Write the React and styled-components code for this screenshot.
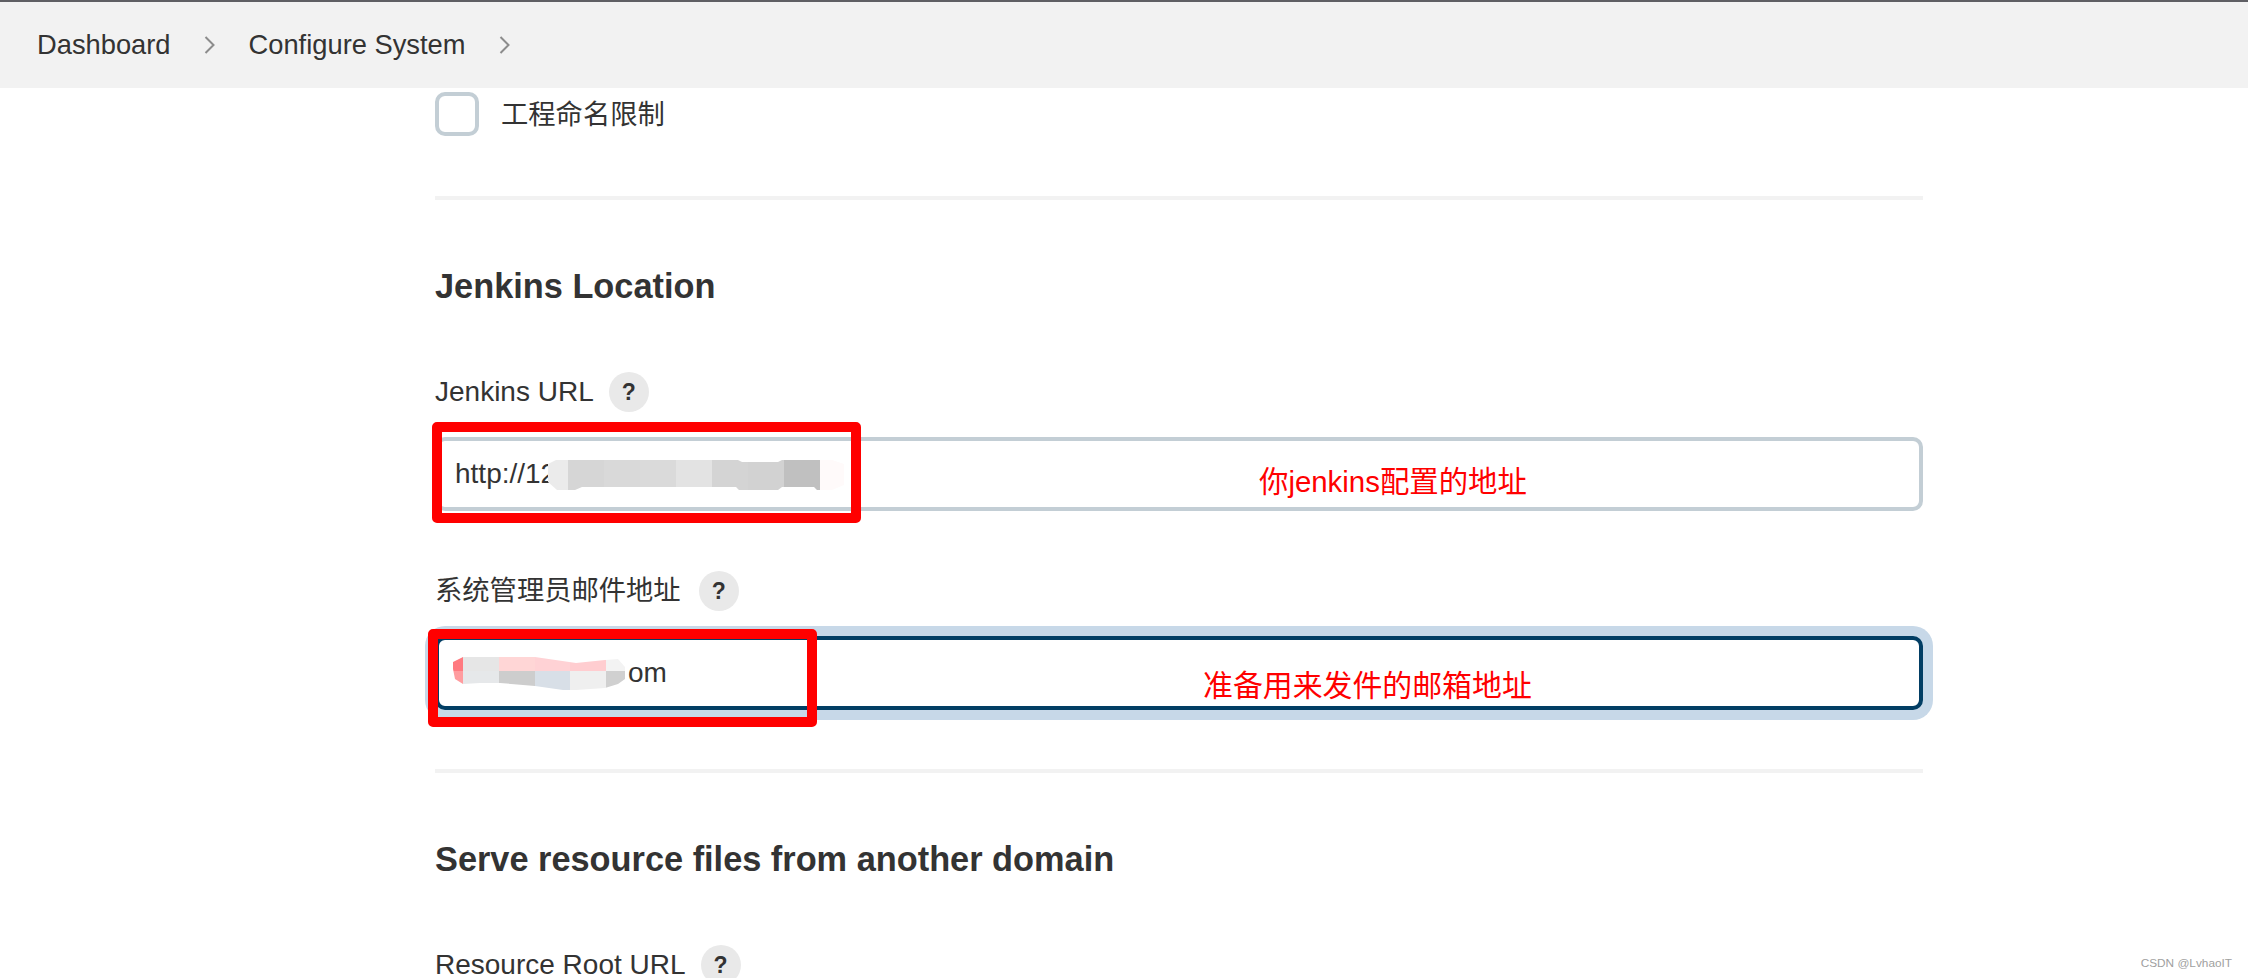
import React from "react";
import styled, { createGlobalStyle } from "styled-components";

const urlBlur = [
    { w: 20, c: "#ebebeb" },
    { w: 36, c: "#d6d6d6" },
    { w: 36, c: "#d9d9d9" },
    { w: 36, c: "#dadada" },
    { w: 36, c: "#e3e3e3" },
    { w: 36, c: "#d4d4d4" },
    { w: 36, c: "#d2d2d2" },
    { w: 36, c: "#c0c0c0" },
    { w: 24, c: "#fffafa" },
];
const mailBlur = [
    "#ff7a80", "#e6e6e6", "#ffd6d6", "#ffd2d5", "#ffcdd0", "#f3f3f3",
    "#ff9c9f", "#e6e8ea", "#cdcdcd", "#d8dfe7", "#efefef", "#d0d0d0",
];

const Chevron = () => (
    <ChevronIcon viewBox="0 0 11 18">
        <polyline points="1.5,1 9.5,9 1.5,17" />
    </ChevronIcon>
);

const App = () => {
    return (
        <Page>
            <Global />
            <Header>
                <Crumb>Dashboard</Crumb>
                <Chevron />
                <Crumb>Configure System</Crumb>
                <Chevron />
            </Header>
            <Content>
                <CheckRow>
                    <CheckBox />
                    <CheckLabel>工程命名限制</CheckLabel>
                </CheckRow>
                <Divider $top={60} />
                <Heading>Jenkins Location</Heading>
                <LabelRow>
                    <span>Jenkins URL</span>
                    <Help>?</Help>
                </LabelRow>
                <Field>
                    <Input $indent={16} defaultValue="http://12" readOnly />
                    <UrlSmear>
                        {urlBlur.map((item, i) => (
                            <SmearCell key={i} $w={item.w} $c={item.c} />
                        ))}
                    </UrlSmear>
                    <RedBox $left={-3} $top={-15} $w={429} $h={101} />
                    <Note $left={824} $top={28} $size={29.4}>你jenkins配置的地址</Note>
                </Field>
                <LabelRow $top={60} $gap={18} $size={27.3}>
                    <span>系统管理员邮件地址</span>
                    <Help>?</Help>
                </LabelRow>
                <Field>
                    <Input $focused $indent={189} defaultValue="om" readOnly />
                    <MailSmear>
                        {mailBlur.map((c, i) => (
                            <SmearCell key={i} $c={c} />
                        ))}
                    </MailSmear>
                    <RedBox $left={-7} $top={-7} $w={389} $h={98} />
                    <Note $left={768} $top={33} $size={29.9}>准备用来发件的邮箱地址</Note>
                </Field>
                <Divider $top={59} />
                <Heading>Serve resource files from another domain</Heading>
                <LabelRow>
                    <span>Resource Root URL</span>
                    <Help>?</Help>
                </LabelRow>
            </Content>
            <Watermark>CSDN @LvhaoIT</Watermark>
        </Page>
    );
};

export default App;

const Global = createGlobalStyle`
    html, body {
        margin: 0;
        padding: 0;
        background: #fff;
    }
    * {
        box-sizing: border-box;
    }
`;
const Page = styled.div`
    position: relative;
    width: 2248px;
    height: 978px;
    overflow: hidden;
    background: #fff;
    color: #333;
    font-family: "Liberation Sans", "Noto Sans CJK SC", sans-serif;
`;
const Header = styled.div`
    display: flex;
    align-items: center;
    gap: 33.5px;
    height: 88px;
    padding-left: 37px;
    background: #f2f2f2;
    border-top: 2px solid #5f5f64;
`;
const Crumb = styled.div`
    font-size: 27.3px;
    color: #333;
`;
const ChevronIcon = styled.svg`
    width: 11px;
    height: 18px;
    fill: none;
    stroke: #8c8c8c;
    stroke-width: 2;
`;
const Content = styled.div`
    width: 1488px;
    margin-left: 435px;
`;
const CheckRow = styled.div`
    display: flex;
    align-items: center;
    gap: 22px;
    margin-top: 4px;
`;
const CheckLabel = styled.span`
    margin-bottom: 4px;
    font-size: 27.3px;
`;
const CheckBox = styled.div`
    width: 44px;
    height: 44px;
    border: 4px solid #c3ced5;
    border-radius: 10px;
`;
const Divider = styled.div`
    height: 4px;
    margin-top: ${({ $top }) => $top}px;
    background: #f2f2f2;
`;
const Heading = styled.h2`
    margin: 66px 0 0;
    font-size: 34.35px;
    line-height: 40px;
    font-weight: 700;
    color: #333;
`;
const LabelRow = styled.div`
    display: flex;
    align-items: center;
    gap: ${({ $gap }) => $gap || 15}px;
    height: 40px;
    margin-top: ${({ $top }) => $top || 66}px;
    font-size: ${({ $size }) => $size || 28}px;
    line-height: 24px;
`;
const Help = styled.div`
    display: flex;
    align-items: center;
    justify-content: center;
    width: 40px;
    height: 40px;
    border-radius: 50%;
    background: #e9e9e9;
    font-size: 23px;
    font-weight: 700;
    color: #333;
`;
const Field = styled.div`
    position: relative;
    margin-top: 25px;
`;
const Input = styled.input`
    display: block;
    width: 100%;
    height: 74px;
    padding: 0 16px 0 ${({ $indent }) => $indent}px;
    border: 4px solid ${({ $focused }) => ($focused ? "#023e64" : "#c3ced5")};
    border-radius: 10px;
    outline: none;
    background: #fff;
    box-shadow: ${({ $focused }) => ($focused ? "0 0 0 10px #c7d8e8" : "none")};
    font-family: inherit;
    font-size: 28px;
    color: #333;
`;
const UrlSmear = styled.div`
    position: absolute;
    left: 113px;
    top: 23px;
    display: flex;
    height: 30px;
    clip-path: polygon(0 4px, 8px 0, 190px 0, 194px 2px, 230px 2px, 234px 0, 284px 0, 296px 4px, 296px 25px, 284px 30px, 269px 30px, 266px 27px, 234px 27px, 230px 30px, 191px 30px, 188px 27px, 34px 27px, 27px 30px, 9px 30px, 0 22px);
`;
const MailSmear = styled.div`
    position: absolute;
    left: 18px;
    top: 21px;
    display: grid;
    grid-template-columns: 10px 36px 36px 35px 36px 19px;
    grid-template-rows: 14px 19px;
    clip-path: polygon(0 5px, 10px 0, 82px 0, 123px 6px, 152px 3px, 165px 2px, 172px 10px, 172px 22px, 165px 27px, 152px 31px, 123px 33px, 110px 33px, 82px 29px, 47px 26px, 27px 26px, 10px 27px, 2px 22px, 0 12px);
`;
const SmearCell = styled.div`
    width: ${({ $w }) => ($w ? `${$w}px` : "auto")};
    background: ${({ $c }) => $c};
`;
const RedBox = styled.div`
    position: absolute;
    left: ${({ $left }) => $left}px;
    top: ${({ $top }) => $top}px;
    width: ${({ $w }) => $w}px;
    height: ${({ $h }) => $h}px;
    border: 10px solid #ff0000;
    border-radius: 5px;
`;
const Note = styled.div`
    position: absolute;
    left: ${({ $left }) => $left}px;
    top: ${({ $top }) => $top}px;
    font-size: ${({ $size }) => $size}px;
    line-height: 34px;
    white-space: nowrap;
    color: #ff0000;
`;
const Watermark = styled.div`
    position: absolute;
    right: 16px;
    bottom: 8px;
    font-size: 11.8px;
    color: #a0a0a0;
`;
